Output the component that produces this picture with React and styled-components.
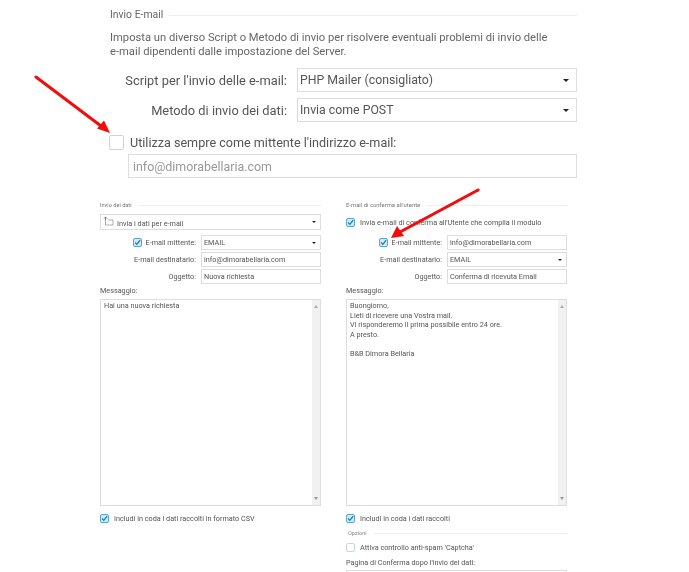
import React from "react";
import styled, { createGlobalStyle } from "styled-components";

const GlobalStyle = createGlobalStyle`
  html, body {
    margin: 0;
    height: 572px;
    overflow: hidden;
    background: #fff;
    font-family: Roboto, "Open Sans", sans-serif;
    color: #555;
  }
`;

const Page = styled.div`
  position: relative;
  width: 689px;
  height: 572px;
  overflow: hidden;
  filter: blur(0.35px);
`;

const TopSection = styled.section`
  width: 467px;
  margin-left: 110px;
  padding-top: 9px;
`;

const Legend = styled.div`
  display: flex;
  align-items: center;
  gap: 6px;
  font-size: ${(p) => p.$size || 10.4}px;
  line-height: 12px;
  height: 12px;
  color: ${(p) => p.$color || "#666"};
  &::after {
    content: "";
    flex: 1;
    height: 1px;
    background: #eee;
  }
`;

const Intro = styled.p`
  margin: 10px 0 9px;
  font-size: 11.2px;
  line-height: 14px;
  color: #666;
  white-space: nowrap;
`;

const BigRow = styled.div`
  display: grid;
  grid-template-columns: 177px 280px;
  column-gap: 10px;
  align-items: center;
  margin-bottom: 6px;
  font-size: 12.85px;
  color: #555;
`;

const RowLabel = styled.label`
  text-align: right;
  white-space: nowrap;
`;

const Control = styled.div`
  box-sizing: border-box;
  display: flex;
  align-items: center;
  justify-content: space-between;
  height: ${(p) => p.$h}px;
  padding: 0 ${(p) => p.$pad}px;
  border: 1px solid #ddd;
  background: #fff;
  white-space: nowrap;
  overflow: hidden;
  color: ${(p) => p.$color || "#555"};
  margin: ${(p) => p.$m || 0};
  font-size: ${(p) => p.$size || "inherit"};
`;

const Caret = styled.span`
  flex: none;
  width: 0;
  height: 0;
  margin-right: ${(p) => (p.$big ? 5 : 2)}px;
  border-left: ${(p) => (p.$big ? 3.5 : 2)}px solid transparent;
  border-right: ${(p) => (p.$big ? 3.5 : 2)}px solid transparent;
  border-top: ${(p) => (p.$big ? 3.5 : 2.5)}px solid #222;
`;

const CheckRow = styled.div`
  display: flex;
  align-items: center;
  gap: ${(p) => p.$gap || 5}px;
  height: ${(p) => p.$h || 14}px;
  margin: ${(p) => p.$m || 0};
  font-size: ${(p) => p.$size || 7.25}px;
  color: #555;
  white-space: nowrap;
`;

const BoxMark = styled.span`
  box-sizing: border-box;
  flex: none;
  display: flex;
  width: ${(p) => p.$s}px;
  height: ${(p) => p.$s}px;
  border: 1px solid ${(p) => (p.$on ? "#5ba5cb" : "#c9d2e6")};
  background: ${(p) => (p.$on ? "#d3e9f6" : "#fff")};
  border-radius: 2px;
`;

const Columns = styled.div`
  display: grid;
  grid-template-columns: 221px 221px;
  column-gap: 25px;
  margin: 21px 0 0 100px;
`;

const Column = styled.div`
  display: flex;
  flex-direction: column;
  font-size: 7.25px;
  color: #555;
`;

const FieldRow = styled.div`
  display: grid;
  grid-template-columns: 96px 120px;
  column-gap: 5px;
  align-items: center;
  height: 15px;
  margin-bottom: 2px;
`;

const FieldLabel = styled.div`
  display: flex;
  justify-content: flex-end;
  align-items: center;
  gap: 4px;
  white-space: nowrap;
`;

const Caption = styled.div`
  height: 10px;
  line-height: 10px;
  margin: ${(p) => p.$m};
  white-space: nowrap;
`;

const MessageBox = styled.div`
  box-sizing: border-box;
  position: relative;
  height: 207px;
  padding: 1px 14px 0 3px;
  border: 1px solid #ddd;
  font-size: 7.25px;
  line-height: 9.6px;
  color: #555;
  white-space: pre-line;
`;

const Scrollbar = styled.div`
  position: absolute;
  top: 0;
  right: 0;
  bottom: 0;
  width: 8px;
  background: #f1f1f1;
  display: flex;
  flex-direction: column;
  justify-content: space-between;
  align-items: center;
  padding: 5px 0;
  box-sizing: border-box;
`;

const ScrollArrow = styled.span`
  width: 0;
  height: 0;
  border-left: 2px solid transparent;
  border-right: 2px solid transparent;
  ${(p) => (p.$up ? "border-bottom: 3px solid #aaa;" : "border-top: 3px solid #999;")}
`;

const Arrows = styled.svg`
  position: absolute;
  inset: 0;
  pointer-events: none;
`;

const Tick = () => (
  <svg viewBox="0 0 10 10" width="100%" height="100%">
    <path d="M1.6 5 L4 7.6 L8.8 1.8" fill="none" stroke="#1c7fb6" strokeWidth="1.8" />
  </svg>
);

const Check = ({ on, size = 9 }) => (
  <BoxMark $s={size} $on={on}>
    {on && <Tick />}
  </BoxMark>
);

const Message = ({ children }) => (
  <MessageBox>
    {children}
    <Scrollbar>
      <ScrollArrow $up />
      <ScrollArrow />
    </Scrollbar>
  </MessageBox>
);

export default function App() {
  return (
    <Page>
      <GlobalStyle />
      <TopSection>
        <Legend>Invio E-mail</Legend>
        <Intro>
          Imposta un diverso Script o Metodo di invio per risolvere eventuali problemi di invio delle
          <br />
          e-mail dipendenti dalle impostazione del Server.
        </Intro>
        <BigRow>
          <RowLabel>Script per l'invio delle e-mail:</RowLabel>
          <Control $h={24} $pad={2} $size="12.3px">
            PHP Mailer (consigliato)
            <Caret $big />
          </Control>
        </BigRow>
        <BigRow>
          <RowLabel>Metodo di invio dei dati:</RowLabel>
          <Control $h={24} $pad={2} $size="12.3px">
            Invia come POST
            <Caret $big />
          </Control>
        </BigRow>
        <CheckRow $h={16} $gap={6} $size={12.6} $m="12px 0 4px -1px">
          <Check size={15} />
          Utilizza sempre come mittente l'indirizzo e-mail:
        </CheckRow>
        <Control $h={24} $pad={4} $m="0 0 0 18px" $color="#999" $size="12.4px">
          info@dimorabellaria.com
        </Control>
      </TopSection>

      <Columns>
        <Column>
          <Legend $size={5.6} $color="#777">Invio dei dati</Legend>
          <Control $h={16} $pad={2} $m="3px 0 5px">
            <span>
              <svg width="11" height="9" viewBox="0 0 11 9" style={{ marginRight: 3 }}>
                <path d="M2.5 3 V8 H10 V3 H5" fill="none" stroke="#9a9a9a" strokeWidth="0.8" />
                <path d="M2.5 0 V3 M1 1.5 L2.5 0 L4 1.5" fill="none" stroke="#3b87b5" strokeWidth="0.9" />
              </svg>
              Invia i dati per e-mail
            </span>
            <Caret />
          </Control>
          <FieldRow>
            <FieldLabel>
              <Check on />
              E-mail mittente:
            </FieldLabel>
            <Control $h={15} $pad={2}>
              EMAIL
              <Caret />
            </Control>
          </FieldRow>
          <FieldRow>
            <FieldLabel>E-mail destinatario:</FieldLabel>
            <Control $h={15} $pad={2}>info@dimorabellaria.com</Control>
          </FieldRow>
          <FieldRow>
            <FieldLabel>Oggetto:</FieldLabel>
            <Control $h={15} $pad={2}>Nuova richiesta</Control>
          </FieldRow>
          <Caption $m="0 0 3px">Messaggio:</Caption>
          <Message>Hai una nuova richiesta</Message>
          <CheckRow $m="5px 0 0">
            <Check on />
            Includi in coda i dati raccolti in formato CSV
          </CheckRow>
        </Column>

        <Column>
          <Legend $size={5.9} $color="#777">E-mail di conferma all'utente</Legend>
          <CheckRow $m="4px 0 6px">
            <Check on />
            Invia e-mail di conferma all'Utente che compila il modulo
          </CheckRow>
          <FieldRow>
            <FieldLabel>
              <Check on />
              E-mail mittente:
            </FieldLabel>
            <Control $h={15} $pad={2}>info@dimorabellaria.com</Control>
          </FieldRow>
          <FieldRow>
            <FieldLabel>E-mail destinatario:</FieldLabel>
            <Control $h={15} $pad={2}>
              EMAIL
              <Caret />
            </Control>
          </FieldRow>
          <FieldRow>
            <FieldLabel>Oggetto:</FieldLabel>
            <Control $h={15} $pad={2}>Conferma di ricevuta Email</Control>
          </FieldRow>
          <Caption $m="0 0 3px">Messaggio:</Caption>
          <Message>
            {"Buongiorno,\nLieti di ricevere una Vostra mail.\nVi risponderemo il prima possibile entro 24 ore.\nA presto.\n\nB&B Dimora Bellaria"}
          </Message>
          <CheckRow $m="5px 0 0">
            <Check on />
            Includi in coda i dati raccolti
          </CheckRow>
          <Legend $size={5.6} $color="#888" style={{ margin: "2px 0 1px 2px" }}>Opzioni</Legend>
          <CheckRow>
            <Check />
            Attiva controllo anti-spam 'Captcha'
          </CheckRow>
          <Caption $m="4px 0 2px">Pagina di Conferma dopo l'invio dei dati:</Caption>
          <Control $h={15} $pad={2} />
        </Column>
      </Columns>

      <Arrows width="689" height="572" viewBox="0 0 689 572">
        <path d="M36 77 L101 126" stroke="#f40c0c" strokeWidth="3" strokeLinecap="round" />
        <path d="M110 133 L97 128.5 L104 120.5 Z" fill="#f40c0c" />
        <path d="M478 190 L400 232" stroke="#f40c0c" strokeWidth="3" strokeLinecap="round" />
        <path d="M391 238 L397 226 L404 236 Z" fill="#f40c0c" />
      </Arrows>
    </Page>
  );
}
